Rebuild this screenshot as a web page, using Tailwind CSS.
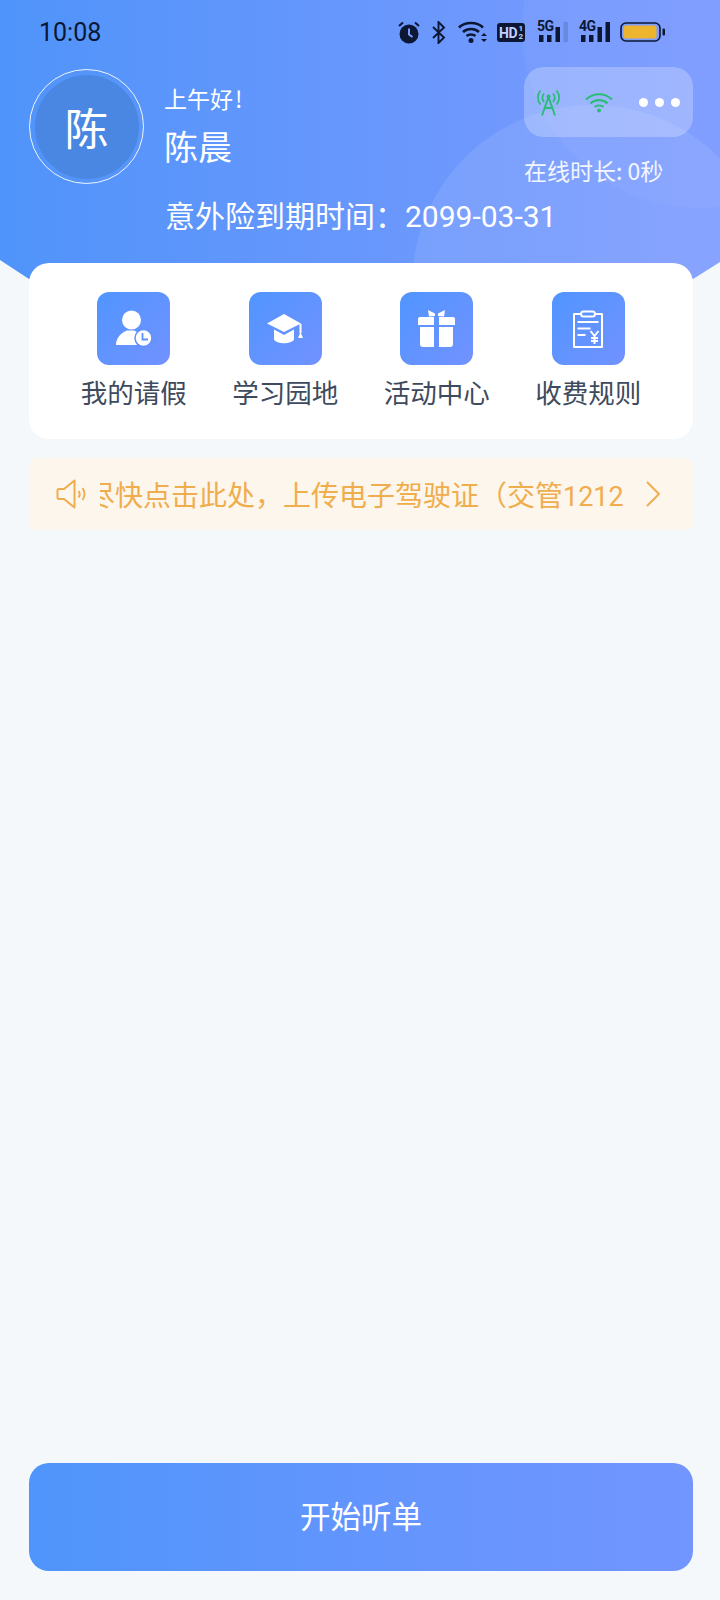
<!DOCTYPE html>
<html lang="zh"><head><meta charset="utf-8">
<script src="https://cdn.jsdelivr.net/npm/@tailwindcss/browser@4"></script>
</head>
<body class="m-0">
<div class="relative w-[720px] h-[1600px] overflow-hidden bg-[#f5f8fb] font-['Noto_Sans_CJK_SC','Noto_Sans',sans-serif] flex flex-col">
  <!-- header background -->
  <div class="absolute left-0 top-0 w-[720px] h-[290px] overflow-hidden bg-linear-to-r from-[#4f94fa] to-[#7c9aff] [clip-path:polygon(0_0,100%_0,100%_262px,693px_279px,29px_279px,0_260px)]">
    <div class="absolute left-[522px] top-[-148px] w-[356px] h-[356px] rounded-full bg-white/[0.045]"></div>
    <div class="absolute left-[412px] top-[105px] w-[360px] h-[360px] rounded-full bg-white/[0.09]"></div>
  </div>

  <!-- status bar -->
  <div class="relative h-[64px] shrink-0 flex items-center pl-[39px] text-[#0c1733]">
    <span class="font-['Roboto',sans-serif] text-[25px] leading-none mt-[1px]">10:08</span>
    <svg class="absolute left-[397px] top-[20px]" width="24" height="24" viewBox="0 0 24 24"><circle cx="12" cy="14" r="9.500" fill="#0c1733"/><path d="M12 8.500v6l3.500 2.500" stroke="#7c9aff" stroke-width="2" fill="none"/><path d="M2 6l4-3.500M22 6l-4-3.500" stroke="#0c1733" stroke-width="2" fill="none"/></svg>
    <svg class="absolute left-[432px] top-[21px]" width="14" height="23" viewBox="0 0 14 23"><path d="M1 6l11 10.500-5.500 5.500V1l5.500 5.500L1 17" stroke="#0c1733" stroke-width="1.900" fill="none"/></svg>
    <svg class="absolute left-[458px] top-[19px]" width="30" height="25" viewBox="0 0 30 25"><path d="M1 8.500C7 2.500 19 2.500 25 8.500M5 13c4.500-4 11.500-4 16 0M8.500 17c2.500-2 6.500-2 9 0" stroke="#0c1733" stroke-width="2.600" fill="none"/><circle cx="13" cy="21.500" r="2.500" fill="#0c1733"/><path d="M23 17l3-3 3 3zM23 20l3 3 3-3z" fill="#0c1733"/></svg>
    <div class="absolute left-[497px] top-[23px] w-[28px] h-[19px] rounded-[3px] bg-[#0c1733] flex items-center pl-[2px] font-['Roboto',sans-serif] font-bold text-[14px] leading-none text-[#c3d0ff] tracking-[-0.5px]">HD<span class="flex flex-col text-[8px] leading-[8px] ml-[1.500px] font-bold"><span>1</span><span>2</span></span></div>
    <div class="absolute left-[537px] top-[20px] w-[31px] h-[23px]">
      <span class="absolute left-0 top-[-1px] font-['Roboto',sans-serif] font-bold text-[14px] leading-[14px] tracking-[-0.5px]">5G</span>
      <svg class="absolute left-0 top-0" width="31" height="23" viewBox="0 0 31 23"><path d="M2 15h4.500v7H2zM10 15h4.500v7H10zM18.500 7H23v15h-4.500z" fill="#0c1733"/><path d="M26.500 2H31v20h-4.500z" fill="#0c1733" opacity=".15"/></svg>
    </div>
    <div class="absolute left-[579px] top-[20px] w-[31px] h-[23px]">
      <span class="absolute left-0 top-[-1px] font-['Roboto',sans-serif] font-bold text-[14px] leading-[14px] tracking-[-0.5px]">4G</span>
      <svg class="absolute left-0 top-0" width="31" height="23" viewBox="0 0 31 23"><path d="M2 15h4.500v7H2zM10 15h4.500v7H10zM18.500 7H23v15h-4.500zM26.500 2H31v20h-4.500z" fill="#0c1733"/></svg>
    </div>
    <svg class="absolute left-[620px] top-[21px]" width="46" height="22" viewBox="0 0 46 22"><rect x="1" y="2" width="39" height="18" rx="5" fill="none" stroke="#0c1733" stroke-width="1.600"/><rect x="3.500" y="4.500" width="33" height="13" rx="2.500" fill="#edb52f"/><rect x="42.500" y="7.500" width="2.500" height="7" rx="1" fill="#0c1733"/></svg>
  </div>

  <!-- profile -->
  <div class="relative h-[199px] shrink-0 text-white">
    <div class="flex items-start pl-[29px] pt-[5px]">
      <div class="w-[115px] h-[115px] rounded-full border border-white/90 flex items-center justify-center shrink-0">
        <div class="w-[104px] h-[104px] rounded-full bg-[#4a87e2] flex items-center justify-center text-[44px] leading-none">陈</div>
      </div>
      <div class="ml-[20px] flex flex-col pt-[12px]">
        <div class="text-[23px] leading-[34px]">上午好<span class="ml-[2px]">!</span></div>
        <div class="text-[34px] leading-[48px] mt-[7px]">陈晨</div>
      </div>
      <div class="ml-auto mr-[27px] mt-[-2px] flex flex-col items-start w-[169px]">
        <div class="w-[169px] h-[70px] rounded-[20px] bg-white/25 flex items-center pl-[11px]">
          <svg width="27" height="30" viewBox="0 0 27 30" fill="none" stroke="#2bbd78" stroke-width="1.800"><path d="M5.500 3.500c-3.500 4-3.500 10 0 14M21.500 3.500c3.500 4 3.500 10 0 14M9 6.500c-2 2.500-2 6 0 8.500M18 6.500c2 2.500 2 6 0 8.500"/><circle cx="13.500" cy="9.500" r="2" fill="#2bbd78" stroke="none"/><path d="M13.500 10L7 28.500M13.500 10L20 28.500M9.500 21h8" stroke-width="2"/></svg>
          <svg class="ml-[22px]" width="30" height="22" viewBox="0 0 30 22" fill="none" stroke="#2bbd78" stroke-width="2.200"><path d="M2 8.500c7-7 19-7 26 0M6.500 12.500c4.500-4.500 12.500-4.500 17 0M10.500 16c2.500-2 6.500-2 9 0"/><circle cx="15" cy="19.500" r="2" fill="#2bbd78" stroke="none"/></svg>
          <div class="ml-[25px] flex gap-[7px]"><span class="w-[9px] h-[9px] rounded-full bg-white"></span><span class="w-[9px] h-[9px] rounded-full bg-white"></span><span class="w-[9px] h-[9px] rounded-full bg-white"></span></div>
        </div>
        <div class="mt-[16px] text-[23px] leading-[34px] whitespace-nowrap text-white/90">在线时长: 0秒</div>
      </div>
    </div>
    <div class="absolute left-[165px] top-[128px] text-[30px] leading-[44px] whitespace-nowrap">意外险到期时间：<span class="font-['Roboto',sans-serif]">2099-03-31</span></div>
  </div>

  <!-- menu card -->
  <div class="relative ml-[29px] w-[664px] h-[176px] shrink-0 rounded-[20px] bg-white grid grid-cols-4 px-[29px] pt-[29px]">
    <div class="flex flex-col items-center">
      <div class="w-[73px] h-[73px] rounded-[12px] bg-linear-to-br from-[#4f95ff] to-[#7192ff] flex items-center justify-center">
        <svg width="40" height="40" viewBox="0 0 40 40"><circle cx="17.500" cy="11" r="9.500" fill="#fff"/><path d="M2 36c0-7 5-12 11-14.500h7c2 1 4 2 5 3.500-2.500 2-3.500 7-2 11z" fill="#fff"/><circle cx="29.500" cy="29" r="8.500" fill="#fff" stroke="#5c92ff" stroke-width="1.500"/><path d="M28.500 24v6.500h5.500" stroke="#5c92ff" stroke-width="1.800" fill="none"/></svg>
      </div>
      <div class="mt-[8px] text-[26.500px] leading-[38px] text-[#3e4a5d] whitespace-nowrap">我的请假</div>
    </div>
    <div class="flex flex-col items-center">
      <div class="w-[73px] h-[73px] rounded-[12px] bg-linear-to-br from-[#4f95ff] to-[#7192ff] flex items-center justify-center">
        <svg width="38" height="32" viewBox="0 0 38 32"><path d="M18 1L1 10.500 18 19l17-8.500z" fill="#fff"/><path d="M8 16.500v10c3 5 17 5 20 0v-10L18 22z" fill="#fff"/><path d="M34.500 11v9" stroke="#fff" stroke-width="2"/><path d="M32 25l2.500-6 2.500 6z" fill="#fff"/></svg>
      </div>
      <div class="mt-[8px] text-[26.500px] leading-[38px] text-[#3e4a5d] whitespace-nowrap">学习园地</div>
    </div>
    <div class="flex flex-col items-center">
      <div class="w-[73px] h-[73px] rounded-[12px] bg-linear-to-br from-[#4f95ff] to-[#7192ff] flex items-center justify-center">
        <svg width="38" height="37" viewBox="0 0 38 37"><path d="M10 0l7 3.500V6l-6 .500zM27 0l-7 3.500V6l6 .500z" fill="#fff"/><path d="M2 7h14v8H0V9q0-2 2-2zM21 7h14q2 0 2 2v6H21zM2 17h14v20H5q-3 0-3-3zM21 17h14v17q0 3-3 3H21z" fill="#fff"/></svg>
      </div>
      <div class="mt-[8px] text-[26.500px] leading-[38px] text-[#3e4a5d] whitespace-nowrap">活动中心</div>
    </div>
    <div class="flex flex-col items-center">
      <div class="w-[73px] h-[73px] rounded-[12px] bg-linear-to-br from-[#4f95ff] to-[#7192ff] flex items-center justify-center relative">
        <svg width="32" height="38" viewBox="0 0 32 38" fill="none" stroke="#fff" stroke-linejoin="round"><path d="M9 4H2v33h28V4h-7" stroke-width="2"/><rect x="9" y="1.500" width="14" height="5" rx="2.500" stroke-width="2"/><path d="M5.500 12h21M5.500 18.500h13M5.500 25h8" stroke-width="2"/><path d="M18.500 21l4 5 4-5M22.500 26v8M19 28h7M19 31h7" stroke-width="2"/></svg>
      </div>
      <div class="mt-[8px] text-[26.500px] leading-[38px] text-[#3e4a5d] whitespace-nowrap">收费规则</div>
    </div>
  </div>

  <!-- notice -->
  <div class="ml-[29px] w-[664px] mt-[19px] h-[72px] shrink-0 rounded-[8px] bg-[#fdf6ec] flex items-center text-[#f0ad4e]">
    <svg class="ml-[27px] shrink-0" width="32" height="32" viewBox="0 0 32 32" fill="none" stroke="#f0ad4e" stroke-width="2"><path d="M3 11h5L18.500 2.500v27L8 21H3q-1.500 0-1.500-1.500v-7Q1.500 11 3 11z" stroke-linejoin="round"/><path d="M22.500 13c1.500 2 1.500 4.500 0 6.500M26.500 10c2.500 3.500 2.500 8.500 0 12"/></svg>
    <div class="ml-[12px] w-[524px] overflow-hidden shrink-0 mt-[2px]">
      <div class="ml-[-13px] text-[28px] leading-[38px] whitespace-nowrap">尽快点击此处，上传电子驾驶证（交管<span class="font-['Roboto',sans-serif] text-[27px]">12123</span>）</div>
    </div>
    <svg class="ml-[20px] shrink-0" width="18" height="28" viewBox="0 0 18 28" fill="none" stroke="#f0ad4e" stroke-width="2"><path d="M3 2l12 12L3 26"/></svg>
  </div>

  <!-- button -->
  <div class="mt-auto mb-[29px] ml-[29px] w-[664px] h-[108px] shrink-0 rounded-[20px] bg-linear-to-r from-[#4f95fb] to-[#7295ff] flex items-center justify-center pb-[4px] text-white text-[30.500px] leading-none">开始听单</div>
</div>
</body></html>
